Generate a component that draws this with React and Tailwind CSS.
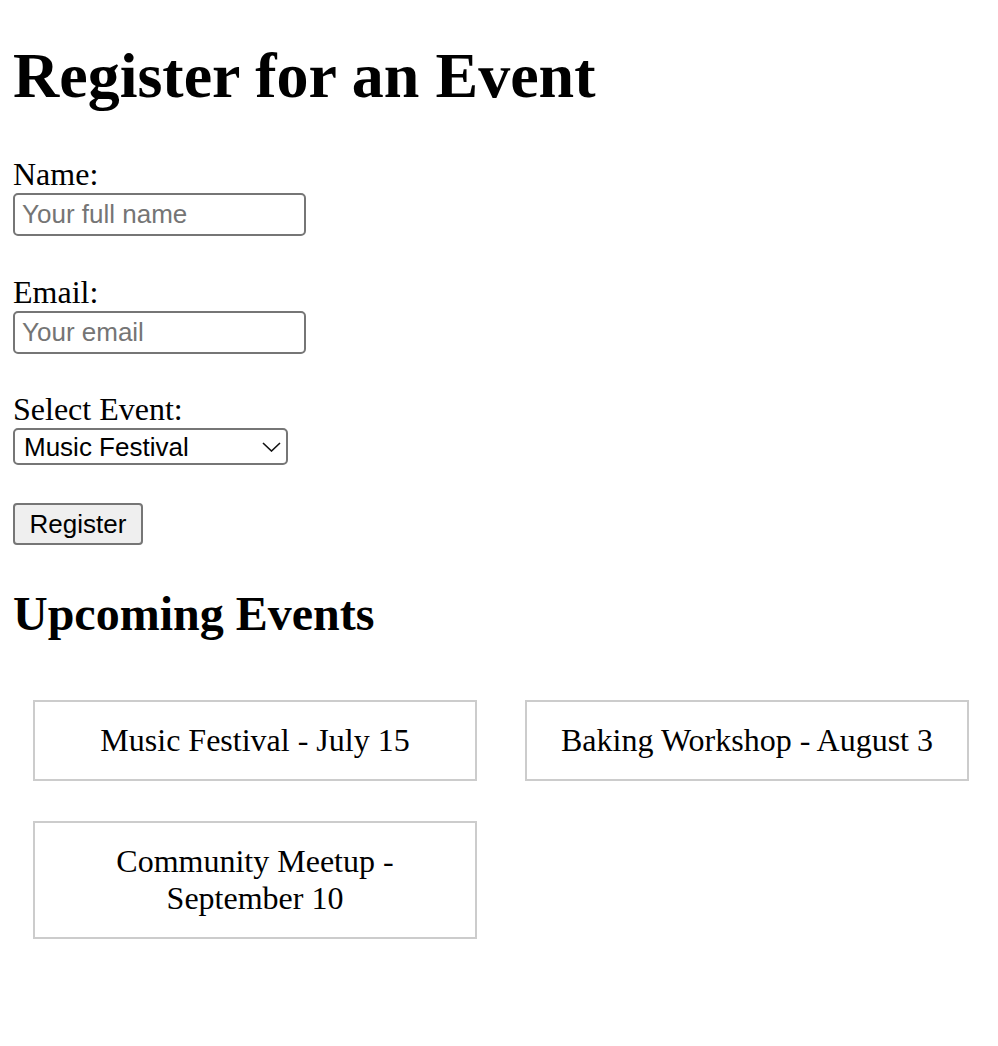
import React from 'react';

const events = [
  'Music Festival - July 15',
  'Baking Workshop - August 3',
  'Community Meetup - September 10',
];

function App() {
  return (
    <div className="min-h-[1046px] bg-white pl-[13px] pr-[13px] pb-10 text-black font-['Liberation_Serif','Times_New_Roman',serif]">
      <h1 className="pt-[39px] text-[64px] leading-[74px] font-bold">Register for an Event</h1>

      {/* Registration form */}
      <form className="mt-[43px]" onSubmit={(e) => e.preventDefault()}>
        <label className="block text-[32px] leading-[37px]">Name:</label>
        <input
          type="text"
          placeholder="Your full name"
          className="block h-[43px] w-[293px] rounded-[5px] border-2 border-[#767676] bg-white px-[7px] text-[26px] font-['Liberation_Sans',Arial,sans-serif] text-black placeholder:text-[#757575] outline-none"
        />

        <label className="mt-[38px] block text-[32px] leading-[37px]">Email:</label>
        <input
          type="email"
          placeholder="Your email"
          className="block h-[43px] w-[293px] rounded-[5px] border-2 border-[#767676] bg-white px-[7px] text-[26px] font-['Liberation_Sans',Arial,sans-serif] text-black placeholder:text-[#757575] outline-none"
        />

        <label className="mt-[37px] block text-[32px] leading-[37px]">Select Event:</label>
        <div className="relative w-[275px]">
          <select className="block h-[37px] w-[275px] appearance-none rounded-[5px] border-2 border-[#767676] bg-white pl-[9px] text-[26px] leading-[30px] font-['Liberation_Sans',Arial,sans-serif] text-black outline-none">
            <option>Music Festival</option>
            <option>Baking Workshop</option>
            <option>Community Meetup</option>
          </select>
          <svg
            className="pointer-events-none absolute left-[249px] top-[14px]"
            width="19"
            height="10"
            viewBox="0 0 19 10"
            fill="none"
          >
            <path d="M1 1l8.5 8 8.5-8" stroke="#111" strokeWidth="1.6" />
          </svg>
        </div>

        <button
          type="submit"
          className="mt-[38px] block h-[42px] w-[130px] rounded-[4px] border-2 border-[#767676] bg-[#efefef] text-[26px] font-['Liberation_Sans',Arial,sans-serif] text-black"
        >
          Register
        </button>
      </form>

      <h2 className="mt-[41px] text-[48px] leading-[55px] font-bold">Upcoming Events</h2>

      {/* Event cards */}
      <div className="mt-[59px] grid grid-cols-[444px_444px] gap-x-[48px] gap-y-[40px] pl-[20px]">
        {events.map((ev) => (
          <div
            key={ev}
            className="self-start border-2 border-[#cccccc] p-5 text-center text-[32px] leading-[37px]"
          >
            {ev}
          </div>
        ))}
      </div>
    </div>
  );
}

export default App;
